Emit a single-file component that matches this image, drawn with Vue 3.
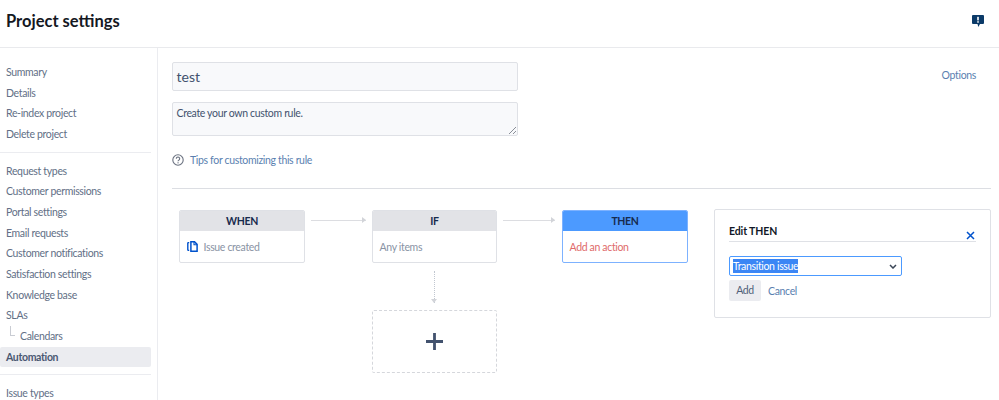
<script setup>
const groups = [
  [{ t: 'Summary' }, { t: 'Details' }, { t: 'Re-index project' }, { t: 'Delete project' }],
  [
    { t: 'Request types' }, { t: 'Customer permissions' }, { t: 'Portal settings' }, { t: 'Email requests' },
    { t: 'Customer notifications' }, { t: 'Satisfaction settings' }, { t: 'Knowledge base' }, { t: 'SLAs' },
    { t: 'Calendars', sub: true }, { t: 'Automation', active: true }
  ],
  [{ t: 'Issue types' }]
]
</script>

<template>
  <div class="page">
    <header class="top">
      <h1>Project settings</h1>
      <svg class="feedback" width="12" height="13" viewBox="0 0 12 13">
        <path d="M1 0h10a1 1 0 0 1 1 1v7a1 1 0 0 1-1 1H8L6.300 12 5.500 9H1a1 1 0 0 1-1-1V1a1 1 0 0 1 1-1z" fill="#0b3a68" />
        <rect x="5.200" y="1.800" width="1.600" height="3.600" fill="#fff" />
        <rect x="5.200" y="6.200" width="1.600" height="1.500" fill="#fff" />
      </svg>
    </header>
    <div class="body">
      <nav class="side">
        <ul v-for="(g, i) in groups" :key="i" class="group">
          <li v-for="item in g" :key="item.t" :class="{ active: item.active, sub: item.sub }">{{ item.t }}</li>
        </ul>
      </nav>
      <main class="main">
        <div class="meta">
          <div class="fields">
            <div class="input">test</div>
            <div class="area">
              Create your own custom rule.
              <svg class="grip" width="7" height="7" viewBox="0 0 7 7">
                <path d="M0 7 7 0M4 7l3-3" stroke="#8a8f98" stroke-width="1" fill="none" />
              </svg>
            </div>
            <div class="tips">
              <svg width="12" height="12" viewBox="0 0 12 12">
                <circle cx="6" cy="6" r="5.200" fill="none" stroke="#6b7280" stroke-width="1.100" />
                <path d="M4.300 4.700a1.700 1.700 0 1 1 2.600 1.400c-.6.400-.9.700-.9 1.200" fill="none" stroke="#6b7280" stroke-width="1.100" />
                <rect x="5.500" y="8.200" width="1.100" height="1.200" fill="#6b7280" />
              </svg>
              <a>Tips for customizing this rule</a>
            </div>
          </div>
          <a class="options">Options</a>
        </div>
        <div class="rule-line"></div>
        <div class="flow">
          <div class="col-when">
            <section class="card">
              <div class="head">WHEN</div>
              <div class="content">
                <svg class="doc" width="11" height="11" viewBox="0 0 11 11">
                  <path d="M2.200 1.600H1.400Q.8 1.600.8 2.300v6.400q0 .7.600.7h.8" fill="none" stroke="#0052cc" stroke-width="1.400" />
                  <path d="M3.900.8h3.600l2.600 2.600v6.800H3.900z" fill="#fff" stroke="#0052cc" stroke-width="1.500" />
                  <path d="M7 .8v3h3" fill="none" stroke="#0052cc" stroke-width="1.100" />
                </svg>
                <span>Issue created</span>
              </div>
            </section>
          </div>
          <div class="arrow"><i></i></div>
          <div class="col-if">
            <section class="card">
              <div class="head">IF</div>
              <div class="content">Any items</div>
            </section>
            <div class="down"><i></i></div>
            <div class="add">
              <svg width="17" height="17" viewBox="0 0 17 17">
                <path d="M8.500 0v17M0 8.500h17" stroke="#42526e" stroke-width="2.800" />
              </svg>
            </div>
          </div>
          <div class="arrow second"><i></i></div>
          <div class="col-then">
            <section class="card then">
              <div class="head">THEN</div>
              <div class="content">Add an action</div>
            </section>
          </div>
          <aside class="panel">
            <div class="panel-head">
              <span>Edit THEN</span>
              <svg width="9" height="9" viewBox="0 0 9 9">
                <path d="M1 1l7 7M8 1 1 8" stroke="#0052cc" stroke-width="1.500" />
              </svg>
            </div>
            <div class="select">
              <span class="picked">Transition issue</span>
              <svg width="8" height="5" viewBox="0 0 8 5">
                <path d="M1 1l3 3 3-3" fill="none" stroke="#3b4657" stroke-width="1.500" />
              </svg>
            </div>
            <div class="actions">
              <span class="btn">Add</span>
              <a>Cancel</a>
            </div>
          </aside>
        </div>
      </main>
    </div>
  </div>
</template>

<style>
html, body { margin: 0; background: #fff; }
</style>

<style scoped>
.page {
  width: 999px;
  height: 400px;
  overflow: hidden;
  font-family: Lato, Roboto, sans-serif;
  font-size: 10.500px;
  letter-spacing: -0.340px;
  color: #42526e;
}
a { color: #5a7fb0; }
.top {
  height: 47px;
  border-bottom: 1px solid #e9eaed;
  display: flex;
  align-items: flex-start;
  justify-content: space-between;
  padding: 0 15px 0 6px;
}
h1 {
  margin: 9px 0 0;
  font-size: 16.500px;
  letter-spacing: 0;
  line-height: 24px;
  font-weight: 700;
  color: #14181f;
}
.feedback { margin-top: 15px; }
.body { display: flex; height: 352px; }
.side {
  width: 157px;
  flex: none;
  border-right: 1px solid #ebecf0;
  padding-top: 14px;
}
.group {
  list-style: none;
  margin: 0 6px 8px 0;
  padding: 0 0 7px;
  border-bottom: 1px solid #ebecf0;
}
.group li {
  height: 20.670px;
  line-height: 20.670px;
  padding-left: 6px;
  color: #626f86;
  white-space: nowrap;
}
.group li.sub { padding-left: 20px; position: relative; }
.group li.sub::before {
  content: "";
  position: absolute;
  left: 10px;
  top: 0;
  width: 4px;
  height: 9px;
  border-left: 1px solid #c9ccd3;
  border-bottom: 1px solid #c9ccd3;
}
.group li.active {
  background: #ebecf0;
  border-radius: 2px;
  font-weight: 700;
  color: #4a5872;
}
.main { flex: 1; padding: 14px 8px 0 14px; min-width: 0; }
.meta { display: flex; justify-content: space-between; align-items: flex-start; }
.fields { width: 346px; }
.input, .area {
  box-sizing: border-box;
  background: #f8f9fb;
  border: 1px solid #dfe1e6;
  border-radius: 2px;
  color: #42526e;
}
.input { height: 29px; line-height: 27px; padding-left: 3.500px; font-size: 14px; letter-spacing: 0; }
.area {
  height: 34px;
  margin-top: 11px;
  padding: 2px 3.500px;
  line-height: 16px;
  position: relative;
}
.grip { position: absolute; right: 1px; bottom: 1px; }
.tips {
  display: flex;
  align-items: center;
  gap: 6px;
  margin-top: 17px;
  height: 14px;
}
.options { margin: 7px 15px 0 0; }
.rule-line { height: 1px; background: #dcdee3; margin-top: 21px; }
.flow { display: flex; align-items: flex-start; margin-top: 21px; padding-left: 7px; }
.col-when, .col-if, .col-then { flex: none; width: 126px; }
.col-if { width: 125px; }
.card {
  box-sizing: border-box;
  height: 53px;
  border: 1px solid #dfe1e6;
  border-radius: 2px;
  background: #fff;
  overflow: hidden;
}
.head {
  height: 20px;
  line-height: 20px;
  background: #e2e3e7;
  text-align: center;
  font-weight: 700;
  color: #172b4d;
}
.content {
  height: 31px;
  box-sizing: border-box;
  display: flex;
  align-items: center;
  padding-left: 6.500px;
  color: #8993a4;
}
.doc { margin-right: 6px; flex: none; }
.then { border-color: #7db2ff; }
.then .head { background: #4c9aff; }
.then .content { color: #e06a6a; }
.arrow {
  flex: none;
  width: 55px;
  margin: 10px 6px 0;
  position: relative;
  height: 1px;
  background: #dcdde1;
}
.arrow.second { width: 52px; margin: 10px 7px 0 6px; }
.arrow i {
  position: absolute;
  right: 0;
  top: -3px;
  border-left: 4px solid #d2d4d9;
  border-top: 3.500px solid transparent;
  border-bottom: 3.500px solid transparent;
}
.down {
  width: 0;
  height: 32px;
  margin: 8px 0 0 62px;
  border-left: 1px dotted #c1c7d0;
  position: relative;
}
.down i {
  position: absolute;
  left: -4px;
  bottom: 0;
  border-top: 4px solid #d2d4d9;
  border-left: 3.500px solid transparent;
  border-right: 3.500px solid transparent;
}
.add {
  box-sizing: border-box;
  height: 63px;
  margin-top: 7px;
  border: 1px dashed #d5d7dc;
  border-radius: 2px;
  display: flex;
  align-items: center;
  justify-content: center;
}
.panel {
  box-sizing: border-box;
  width: 277px;
  height: 109px;
  margin: -1px 0 0 26px;
  border: 1px solid #dfe1e6;
  border-radius: 2px;
  padding: 14px 14px 0;
  flex: none;
}
.panel-head {
  box-sizing: border-box;
  display: flex;
  justify-content: space-between;
  align-items: flex-end;
  height: 18px;
  padding: 0 0 3px;
  border-bottom: 1px solid #dfe1e6;
  color: #111827;
  font-weight: 700;
  font-size: 10.500px;
  letter-spacing: -0.100px;
  line-height: 14px;
}
.panel-head svg { margin: 0 1px 0 0; transform: translateY(2px); }
.select {
  box-sizing: border-box;
  width: 173px;
  height: 20px;
  margin-top: 14px;
  border: 1px solid #4c9aff;
  border-radius: 2px;
  display: flex;
  align-items: center;
  justify-content: space-between;
  padding: 0 4px 0 3px;
  color: #fff;
}
.picked { background: #3b86f5; line-height: 14px; }
.actions { display: flex; align-items: center; gap: 7px; margin-top: 4px; }
.btn {
  width: 32px;
  height: 21px;
  line-height: 21px;
  text-align: center;
  background: #ebecf0;
  border-radius: 2px;
  color: #505f79;
}
</style>
